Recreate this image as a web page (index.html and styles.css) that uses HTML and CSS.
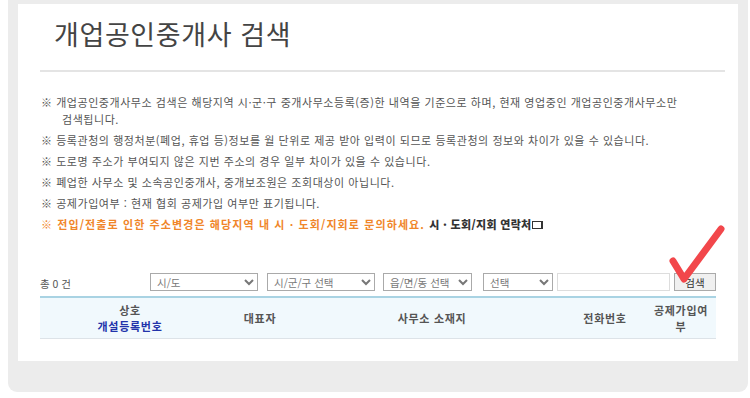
FILE: index.html
```html
<!DOCTYPE html>
<html lang="ko">
<head>
  <meta charset="UTF-8">
  <title>개업공인중개사 검색</title>
  <link rel="stylesheet" href="styles.css">
</head>
<body>
  <div class="frame">
    <div class="panel">
      <h2 class="title">개업공인중개사 검색</h2>
      <hr class="rule">

      <ul class="notes">
        <li>※ 개업공인중개사무소 검색은 해당지역 시·군·구 중개사무소등록(증)한 내역을 기준으로 하며, 현재 영업중인 개업공인중개사무소만<br><span class="indent">검색됩니다.</span></li>
        <li>※ 등록관청의 행정처분(폐업, 휴업 등)정보를 월 단위로 제공 받아 입력이 되므로 등록관청의 정보와 차이가 있을 수 있습니다.</li>
        <li>※ 도로명 주소가 부여되지 않은 지번 주소의 경우 일부 차이가 있을 수 있습니다.</li>
        <li>※ 폐업한 사무소 및 소속공인중개사, 중개보조원은 조회대상이 아닙니다.</li>
        <li>※ 공제가입여부 : 현재 협회 공제가입 여부만 표기됩니다.</li>
        <li class="warn">※ 전입/전출로 인한 주소변경은 해당지역 내 시 · 도회/지회로 문의하세요. <b class="contact">시 · 도회/지회 연락처<span class="link-ico"></span></b></li>
      </ul>

      <div class="search">
        <span class="count">총 0 건</span>
        <select class="sel sel-sido"><option>시/도</option></select>
        <select class="sel sel-gu"><option>시/군/구 선택</option></select>
        <select class="sel sel-dong"><option>읍/면/동 선택</option></select>
        <select class="sel sel-type"><option>선택</option></select>
        <input class="keyword" type="text">
        <button class="btn">검색</button>
        <svg class="check" width="70" height="68" viewBox="0 0 70 68">
          <path d="M13 40 L24 58 L61 8" fill="none" stroke="#f2474b" stroke-width="7" stroke-linecap="round" stroke-linejoin="round"/>
        </svg>
      </div>

      <table class="result">
        <thead>
          <tr>
            <th class="c-name">상호<br><span class="sub">개설등록번호</span></th>
            <th class="c-rep">대표자</th>
            <th class="c-addr">사무소 소재지</th>
            <th class="c-tel">전화번호</th>
            <th class="c-ins">공제가입여<br>부</th>
          </tr>
        </thead>
      </table>
    </div>
  </div>
</body>
</html>
```

FILE: styles.css
```css
body {
  margin: 0;
  background: #fff;
  font-family: "Noto Sans CJK KR", "Noto Sans", sans-serif;
}

.frame {
  width: 720px;
  height: 357px;
  margin-left: 8px;
  padding: 4px 10px 31px;
  background: #ececec;
  border-radius: 0 0 9px 9px;
}

.panel {
  height: 357px;
  background: #fff;
  overflow: hidden;
}

.title {
  margin: 0;
  padding: 10px 0 0 36px;
  height: 48px;
  font-size: 27px;
  font-weight: 400;
  color: #444;
  letter-spacing: 0.6px;
}

.rule {
  margin: 8px 13px 0 22px;
  border: 0;
  height: 2px;
  background: #e4e4e4;
}

.notes {
  list-style: none;
  margin: 22px 0 0 23px;
  padding: 0;
  font-size: 11px;
  letter-spacing: 0.55px;
  color: #555;
}

.notes li {
  line-height: 17px;
  margin-bottom: 4px;
}

.notes .indent {
  padding-left: 21px;
}

.notes .warn {
  color: #f0862a;
  font-weight: bold;
  letter-spacing: 1.1px;
}

.contact {
  color: #333;
  letter-spacing: 0.3px;
}

.link-ico {
  display: inline-block;
  width: 8px;
  height: 6px;
  margin-left: 1px;
  border: 1px solid #333;
  border-right-width: 2px;
}

.search {
  position: relative;
  display: flex;
  align-items: flex-end;
  margin: 38px 0 0 22px;
  width: 676px;
  height: 20px;
}

.count {
  font-size: 10.5px;
  color: #555;
  width: 110px;
  line-height: 14px;
}

.sel {
  height: 18px;
  margin-right: 9px;
  border: 1px solid #aaa;
  background: #fff;
  font-family: inherit;
  font-size: 10.5px;
  color: #777;
  padding: 0 2px;
}

.sel-sido { width: 108px; }
.sel-gu { width: 108px; margin-right: 8px; }
.sel-dong { width: 89px; margin-right: 11px; }
.sel-type { width: 70px; margin-right: 4px; }

.keyword {
  width: 113px;
  height: 18px;
  box-sizing: border-box;
  margin-right: 4px;
  border: 1px solid #ddd;
  padding: 0;
}

.btn {
  width: 42px;
  height: 18px;
  padding: 0;
  border: 1px solid #aaa;
  background: #f0f0f0;
  font-family: inherit;
  font-size: 10.5px;
  color: #333;
}

.check {
  position: absolute;
  left: 620px;
  top: -50px;
}

.result {
  margin: 5px 0 0 22px;
  width: 676px;
  table-layout: fixed;
  border-collapse: collapse;
  border-top: 2px solid #a9d3e3;
  border-bottom: 1px solid #dde3e8;
  background: #f1f9fd;
}

.result th {
  height: 40px;
  padding: 0;
  font-size: 11px;
  font-weight: bold;
  letter-spacing: 0.7px;
  color: #555;
  line-height: 16px;
  text-align: center;
}

.result .sub {
  color: #2233aa;
}

.c-name { width: 180px; }
.c-rep { width: 80px; }
.c-addr { width: 264px; }
.c-tel { width: 82px; }
.c-ins { width: 70px; }
```
